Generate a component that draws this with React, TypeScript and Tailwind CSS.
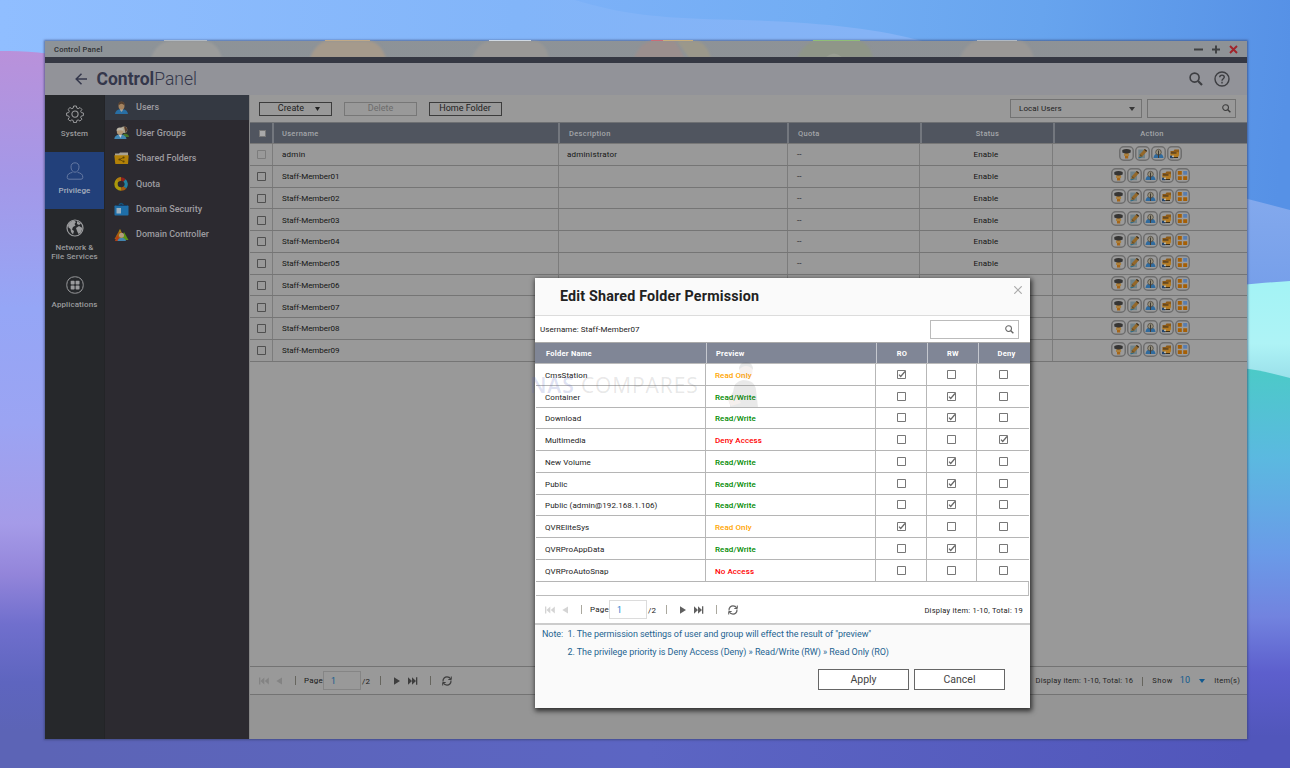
import type { ReactNode } from "react";

const users = ["admin", ...Array.from({ length: 9 }, (_, i) => `Staff-Member0${i + 1}`)];

type Access = "RO" | "RW" | "Deny" | "None";

const folders: { name: string; access: Access }[] = [
  { name: "CmsStation", access: "RO" },
  { name: "Container", access: "RW" },
  { name: "Download", access: "RW" },
  { name: "Multimedia", access: "Deny" },
  { name: "New Volume", access: "RW" },
  { name: "Public", access: "RW" },
  { name: "Public (admin@192.168.1.106)", access: "RW" },
  { name: "QVREliteSys", access: "RO" },
  { name: "QVRProAppData", access: "RW" },
  { name: "QVRProAutoSnap", access: "None" },
];

const preview: Record<Access, { label: string; color: string }> = {
  RO: { label: "Read Only", color: "text-[#ffa500]" },
  RW: { label: "Read/Write", color: "text-[#008a00]" },
  Deny: { label: "Deny Access", color: "text-[#ff0000]" },
  None: { label: "No Access", color: "text-[#ff0000]" },
};

function Wallpaper() {
  return (
    <svg className="absolute inset-0 h-full w-full" viewBox="0 0 1290 768" preserveAspectRatio="none">
      <defs>
        <linearGradient id="sky" x1="0" x2="1" y1="0" y2="0">
          <stop offset="0" stopColor="#90beff" />
          <stop offset="0.4" stopColor="#82b5f9" />
          <stop offset="0.6" stopColor="#84b3f6" />
          <stop offset="0.75" stopColor="#86b3f5" />
          <stop offset="1" stopColor="#5691e6" />
        </linearGradient>
        <linearGradient id="deep" x1="575" x2="1290" y1="0" y2="60" gradientUnits="userSpaceOnUse">
          <stop offset="0" stopColor="#7cb1f8" />
          <stop offset="0.35" stopColor="#72adf3" />
          <stop offset="0.65" stopColor="#67a4ee" />
          <stop offset="1" stopColor="#5691e6" />
        </linearGradient>
        <linearGradient id="left" x1="0" x2="0" y1="50" y2="768" gradientUnits="userSpaceOnUse">
          <stop offset="0" stopColor="#b991da" />
          <stop offset="0.18" stopColor="#a498e8" />
          <stop offset="0.36" stopColor="#95a6f6" />
          <stop offset="0.52" stopColor="#9ba4f3" />
          <stop offset="0.66" stopColor="#a59be8" />
          <stop offset="0.73" stopColor="#9385da" />
          <stop offset="0.8" stopColor="#706fcd" />
          <stop offset="0.88" stopColor="#5e65bf" />
          <stop offset="0.95" stopColor="#5c64b6" />
          <stop offset="1" stopColor="#5c64b6" />
        </linearGradient>
        <linearGradient id="right" x1="0" x2="0" y1="370" y2="768" gradientUnits="userSpaceOnUse">
          <stop offset="0" stopColor="#4ccac8" />
          <stop offset="0.22" stopColor="#5bb9e0" />
          <stop offset="0.46" stopColor="#6a9be8" />
          <stop offset="0.62" stopColor="#7283df" />
          <stop offset="0.76" stopColor="#5d5fcd" />
          <stop offset="0.92" stopColor="#5156bb" />
          <stop offset="1" stopColor="#5156bb" />
        </linearGradient>
        <linearGradient id="floor" x1="0" x2="1" y1="0" y2="0">
          <stop offset="0" stopColor="#5c64b6" />
          <stop offset="0.5" stopColor="#5c65c3" />
          <stop offset="1" stopColor="#5156bb" />
        </linearGradient>
        <linearGradient id="mint" x1="0" x2="0" y1="0" y2="1">
          <stop offset="0" stopColor="#a3f3f5" />
          <stop offset="0.6" stopColor="#aef3f6" />
          <stop offset="1" stopColor="#97dde8" />
        </linearGradient>
        <linearGradient id="peri" x1="0" x2="0" y1="0" y2="1">
          <stop offset="0" stopColor="#83a9ed" />
          <stop offset="1" stopColor="#769fea" />
        </linearGradient>
      </defs>
      <rect width="1290" height="768" fill="url(#sky)" />
      <path d="M575 0C620 14 660 18 720 19.500C800 21 870 26 926 42L1290 300V0Z" fill="url(#deep)" />
      <path d="M0 51C25 51 50 52 80 60L80 768L0 768Z" fill="url(#left)" />
      <path d="M1240 197L1290 210L1290 290L1240 290Z" fill="url(#peri)" />
      <path d="M1240 285C1260 283 1275 282 1290 281L1290 385L1240 378Z" fill="url(#mint)" />
      <path d="M1240 368C1260 370 1275 374 1290 378L1290 768L1240 768Z" fill="url(#right)" />
      <rect x="45" y="736" width="1202" height="32" fill="url(#floor)" />
    </svg>
  );
}

function TitleBlobs() {
  return (
    <svg className="absolute left-0 -top-[1px] h-[17px] w-full" viewBox="0 0 1202 17">
      <defs>
        <filter id="soft" x="-10%" y="-10%" width="120%" height="120%">
          <feGaussianBlur stdDeviation="1" />
        </filter>
      </defs>
      <g filter="url(#soft)">
        <path d="M106 18Q112 1 127 1H158Q172 1 177 18Z" fill="#9b9c9b" />
        <path d="M265 18Q272 1 284 1H322Q335 1 341 18Z" fill="#a59a8c" />
        <path d="M427 18Q434 1 447 1H488Q500 1 504 18Z" fill="#999896" />
        <path d="M589 18Q596 1 608 1H630L640 18Z" fill="#9b8f8e" />
        <path d="M632 1H650Q661 1 666 18H644Z" fill="#9b988b" />
        <path d="M752 18Q760 1 773 1H812Q824 1 828 18Z" fill="#8f9688" />
        <path d="M915 18Q922 1 934 1H973Q984 1 989 18Z" fill="#9a9896" />
      </g>
      <path d="M119 .5H162M932 .5H972" stroke="#b0b9c3" />
      <path d="M280 .5H325" stroke="#c0a987" />
      <path d="M444 .5H486" stroke="#d0d9e3" />
      <path d="M606 .5H618" stroke="#c86d78" />
      <path d="M618 .5H648" stroke="#c8ae7c" />
      <path d="M768 .5H815" stroke="#8fbe76" />
      <path d="M780 18Q789 9 798 18" fill="#999e92" />
    </svg>
  );
}

function Search({ className }: { className: string }) {
  return (
    <svg viewBox="0 0 14 14" className={className} fill="none" stroke="currentColor">
      <circle cx="5.6" cy="5.6" r="4.5" strokeWidth="1.6" />
      <path d="M9 9l4 4" strokeWidth="2.2" />
    </svg>
  );
}

function Box({ checked, className = "text-[#777]" }: { checked?: boolean; className?: string }) {
  return (
    <svg viewBox="0 0 9 9" className={`block h-[9px] w-[9px] ${className}`} fill="none" stroke="currentColor">
      <path d="M.5 .5H8.5V8.5H.5Z" />
      {checked && <path d="M2 4.7L3.7 6.5L8 1.5" stroke="#666" strokeWidth="1.2" />}
    </svg>
  );
}

function SideIcon({ kind }: { kind: string }) {
  return (
    <svg viewBox="0 0 18 18" className="block h-[18px] w-[18px]" fill="none" stroke="currentColor">
      {kind === "gear" && (
        <>
          <path d="M7.6 1h2.8l.4 2.1 1.4.6 1.8-1.2 1.9 1.9-1.2 1.8.6 1.4 2.1.4v2.6l-2.1.4-.6 1.4 1.2 1.8-1.9 1.9-1.8-1.2-1.4.6-.4 2.1H7.6l-.4-2.1-1.4-.6L4 16.100l-1.900-1.900 1.200-1.800-.6-1.400-2.100-.4V8l2.100-.4.6-1.400L2.100 4.400 4 2.500l1.800 1.200 1.400-.6z" strokeWidth="1" />
          <circle cx="9" cy="9.100" r="3.100" strokeWidth="1.100" />
        </>
      )}
      {kind === "user" && (
        <>
          <path d="M9 .8C6.200.8 5 2.600 5 5.100C5 8 6.800 10.200 9 10.200S13 8 13 5.100C13 2.600 11.800.8 9 .8Z" />
          <path d="M6.400 10.400C3.200 11.200 1.200 12 1.200 15.400Q1.200 17.200 3 17.200H15Q16.800 17.200 16.800 15.400C16.800 12 14.800 11.200 11.600 10.400" />
        </>
      )}
      {kind === "globe" && (
        <>
          <circle cx="9" cy="9" r="8" strokeWidth="1.200" />
          <path d="M2 6Q4 2 8 1.500L10 3 8.500 5 9.500 6.500 7 8 6 10.500 8 12 7 15.500 5 13 4.500 10 2.500 8.500ZM11 2L15 4.500 13 6 11 5ZM10 9L13 7 16.500 9 15 13.500 12.500 15 11 12Z" fill="currentColor" stroke="none" />
        </>
      )}
      {kind === "apps" && (
        <>
          <rect x=".8" y=".8" width="16.400" height="16.400" rx="7.500" />
          <g fill="currentColor" stroke="none">
            <rect x="4.700" y="4.700" width="3.900" height="3.900" rx=".8" />
            <rect x="9.600" y="4.700" width="3.900" height="3.900" rx=".8" />
            <rect x="4.700" y="9.600" width="3.900" height="3.900" rx=".8" />
            <rect x="9.600" y="9.600" width="3.900" height="3.900" rx=".8" />
          </g>
        </>
      )}
    </svg>
  );
}

function MenuIcon({ kind }: { kind: string }) {
  return (
    <svg viewBox="0 0 15 14" className="block h-[14px] w-[15px]">
      {kind === "users" && (
        <>
          <path d="M1 13Q1.500 9 6 8.300H9Q13.500 9 14 13Z" fill="#286ea3" />
          <path d="M6 7H9V9L7.500 11 6 9Z" fill="#a5a39f" />
          <ellipse cx="7.500" cy="4.700" rx="3" ry="3.900" fill="#a4835f" />
          <path d="M4.500 4.500Q4 .5 7.500 .5T10.500 4.500Q9 2.800 7.500 2.800T4.500 4.500Z" fill="#554030" />
        </>
      )}
      {kind === "groups" && (
        <>
          <path d="M8 11Q8 8 11 7.500Q15 8 15 11Z" fill="#47752a" />
          <circle cx="10" cy="3.700" r="3.300" fill="#b0a792" />
          <path d="M10 .5Q13.300 .7 13.200 4.500L11.500 7Z" fill="#5b3d28" />
          <path d="M.3 13Q.5 9.500 4.500 8.500H8Q12 9.500 12.500 13Z" fill="#4287b3" />
          <path d="M4.500 8.500H8L6.500 12Z" fill="#ccc" />
          <circle cx="6" cy="5.500" r="3.200" fill="#b39775" />
          <path d="M2.600 5Q2.200 1.500 6 1.500T9.200 5Q7 3.500 2.600 5Z" fill="#bbb5a7" />
        </>
      )}
      {kind === "folder" && (
        <>
          <path d="M1 2.500H5L6 1.500H14V11H1Z" fill="#aaa393" />
          <path d="M.3 4.300H14.700L14 13H1.300Z" fill="#b28108" />
          <path d="M5.500 8.500L9.500 6.500M5.500 8.500L9.500 10.500" stroke="#5f4507" strokeWidth=".8" />
          <circle cx="5.500" cy="8.500" r="1.100" fill="#5f4507" />
          <circle cx="9.600" cy="6.500" r="1" fill="#5f4507" />
          <circle cx="9.600" cy="10.500" r="1" fill="#5f4507" />
        </>
      )}
      {kind === "quota" && (
        <g fill="none" strokeWidth="3.400">
          <path d="M7 2A5 5 0 0 0 7 12" stroke="#aa980b" />
          <path d="M3.500 3.500A5 5 0 0 1 7 2" stroke="#b07a12" />
          <path d="M7 12A5 5 0 0 0 11 10.500" stroke="#a55b10" />
          <path d="M7 2A5 5 0 0 1 10.500 3.500" stroke="#90211c" />
          <path d="M10.500 3.500A5 5 0 0 1 11 10.500" stroke="#2382a0" />
        </g>
      )}
      {kind === "security" && (
        <>
          <path d="M4.500 4Q7 -1 10 4" stroke="#12547f" strokeWidth="1.400" fill="none" />
          <rect x=".5" y="3.500" width="14" height="10" rx=".8" fill="#1e6ea8" />
          <rect x="2.500" y="6" width="4.500" height="5.500" fill="#9cb0bf" />
          <path d="M2.500 3.500H13" stroke="#143f69" />
        </>
      )}
      {kind === "controller" && (
        <>
          <path d="M6 1L11 11H.5Z" fill="#a4620d" />
          <path d="M10 4L14.500 12H7Z" fill="#5a9414" />
          <path d="M3 7L7 13H1Z" fill="#b53e14" />
          <path d="M3.500 13Q4 10 7.500 9.800Q11.500 10 12 13Z" fill="#4384ad" />
          <circle cx="7.500" cy="7.300" r="2.500" fill="#b39b7c" />
          <path d="M6 1L7 4H5Z" fill="#98931a" />
        </>
      )}
    </svg>
  );
}

function ActionIcon({ kind }: { kind: number }) {
  return (
    <svg viewBox="0 0 15 15" className="block h-[15px] w-[15px] shrink-0">
      <rect x=".75" y=".75" width="13.500" height="13.500" rx="4" fill="#9b9b9b" stroke="#6e6e6e" strokeWidth="1.500" />
      <g transform="translate(2.500 2.500)">
        {kind === 0 && (
          <>
            <path d="M3.500 4H6.700V10H3.500Z" fill="#a5661a" />
            <path d="M2.500 5H7.600V7.500H2.500Z" fill="#aa803e" />
            <path d="M.8 1.500Q5 -.5 9.200 1.500V4Q5 5.800 .8 4Z" fill="#363534" />
          </>
        )}
        {kind === 1 && (
          <>
            <path d="M.8 1H7.500V9.700H.8Z" fill="#6f8289" />
            <path d="M1.500 9L2.600 5.500 7.200 .6 9.600 2.500 4.800 8Z" fill="#946829" />
            <path d="M7 .9L9.200 2.800" stroke="#332a20" strokeWidth="1.200" />
            <path d="M2.500 6L4.300 8" stroke="#3a3227" strokeWidth=".8" />
            <path d="M1 9.500L4 8.500" stroke="#2d6a85" strokeWidth="1.300" />
          </>
        )}
        {kind === 2 && (
          <>
            <path d="M0 9.500Q.3 6 3 5.200H7Q9.700 6 10 9.500Z" fill="#306b9e" />
            <path d="M2.200 4Q2.200 .8 5 .8T7.800 4Q7.500 6.500 5 6.500T2.200 4Z" fill="#97907c" stroke="#4c483f" strokeWidth=".8" />
            <path d="M5 2V9.500" stroke="#3c3a36" />
          </>
        )}
        {kind === 3 && (
          <>
            <path d="M1 2.500H4L5 1H9.500V5.500H1Z" fill="#8e5b17" />
            <path d="M.8 4.500L9 3.500 9.700 6.500 8 9H4L1 7Z" fill="#b37a22" />
            <path d="M1.500 4.500H7" stroke="#352a20" />
            <path d="M.5 7.200H3.700V9.700H.5Z" fill="#24466f" />
            <path d="M2.500 7H4.500V8.500H2.500Z" fill="#b9b6a6" />
            <path d="M4 9H8.500" stroke="#3a2e1a" />
          </>
        )}
        {kind === 4 && (
          <>
            <path d="M.3 .5H4.300V4.200H.3ZM.3 5.800H4.300V9.500H.3ZM5.700 5.800H9.700V9.500H5.700Z" fill="#a55f06" />
            <path d="M5.700 .5H9.700V4.200H5.700Z" fill="#587db0" />
          </>
        )}
      </g>
    </svg>
  );
}

function Pager({ dim }: { dim?: boolean }) {
  const faint = dim ? "text-[#838383]" : "text-[#d4d4d4]";
  const strong = dim ? "text-[#3e3e3e]" : "text-[#606060]";
  const sep = dim ? "bg-[#66655e]" : "bg-[#aaa89e]";
  return (
    <div className={`flex items-center text-[8px] tracking-[0.25px] ${dim ? "text-[#1a1a1a]" : "text-[#222]"}`}>
      <svg viewBox="0 0 10 8" className={`h-[8px] w-[10px] ${faint}`} fill="currentColor">
        <path d="M0 .5H1.300V7.500H0ZM5.300 .5V7.500L1.500 4ZM9.800 .5V7.500L5.800 4Z" />
      </svg>
      <svg viewBox="0 0 6 8" className={`ml-[7px] h-[8px] w-[6px] ${faint}`} fill="currentColor">
        <path d="M6 .5V7.500L.3 4Z" />
      </svg>
      <span className={`ml-[13px] h-[9px] w-px ${sep}`} />
      <span className="ml-[8px] w-[19px] pt-px whitespace-nowrap">Page</span>
      <span className={`flex h-[19px] w-[38px] items-center border pt-px pl-[7px] text-[8.500px] ${dim ? "border-[#858585] text-[#11598f]" : "border-[#dcdcdc] text-[#2083cf]"}`}>1</span>
      <span className="ml-[1px] w-[10px] pt-[2px]">/2</span>
      <span className={`ml-[8px] h-[9px] w-px ${sep}`} />
      <svg viewBox="0 0 6 8" className={`ml-[13px] h-[8px] w-[6px] ${strong}`} fill="currentColor">
        <path d="M0 .3V7.700L6 4Z" />
      </svg>
      <svg viewBox="0 0 10 8" className={`ml-[8px] h-[8px] w-[10px] ${strong}`} fill="currentColor">
        <path d="M0 .3V7.700L4 4ZM4 .3V7.700L8 4ZM8 .3H9.300V7.700H8Z" />
      </svg>
      <span className={`ml-[12px] h-[9px] w-px ${sep}`} />
      <svg viewBox="0 0 10 10" className={`ml-[11px] h-[10px] w-[10px] ${strong}`} fill="none" stroke="currentColor" strokeWidth="1.200">
        <path d="M1 5.500C.8 2.300 3 .9 5 .9C6.800 .9 8 1.800 8.700 3M9 4.500C9.200 7.700 7 9.100 5 9.100C3.200 9.100 2 8.200 1.300 7" />
        <path d="M9.300 .5V3.500H6.300M.7 9.500V6.500H3.700" strokeWidth="1" />
      </svg>
    </div>
  );
}

function Cell({ className, children }: { className: string; children?: ReactNode }) {
  return <div className={`flex h-full shrink-0 items-center whitespace-nowrap ${className}`}>{children}</div>;
}

function UsersTable() {
  const line = "border-r-[1.500px] border-[#7c7c7c]";
  const head = "border-r-2 border-[#73777e]";
  return (
    <>
      <div className="flex h-[22px] shrink-0 border-y border-t-[#6e7073] border-b-[#777] bg-[#50555f] text-[7.500px] font-medium tracking-[0.300px] text-[#a3a5a9]">
        <Cell className={`w-[24px] justify-center ${head}`}>
          <span className="ml-[2px] h-[7px] w-[7px] border border-[#777] bg-[#a9a9a9]" />
        </Cell>
        <Cell className={`w-[286px] pt-[2px] pl-[8px] ${head}`}>Username</Cell>
        <Cell className={`w-[229px] pt-[2px] pl-[9px] ${head}`}>Description</Cell>
        <Cell className={`w-[133px] pt-[2px] pl-[9px] ${head}`}>Quota</Cell>
        <Cell className={`w-[133px] justify-center pt-[2px] ${head}`}>Status</Cell>
        <Cell className="w-[194px] justify-center pt-[2px]">Action</Cell>
      </div>
      {users.map((name, i) => (
        <div key={name} className="flex h-[21.750px] shrink-0 border-b border-[#757575] text-[8px] text-[#151515]">
          <Cell className={`w-[23px] justify-center pt-px pl-px ${line}`}>
            <Box className={i === 0 ? "text-[#7c7c7c]" : "text-[#505050]"} />
          </Cell>
          <Cell className={`w-[286px] pt-[2px] pl-[9px] ${i === 0 ? "tracking-[0.250px]" : "tracking-[-0.050px]"} ${line}`}>{name}</Cell>
          <Cell className={`w-[229px] pt-[2px] pl-[8px] tracking-[0.200px] ${line}`}>{i === 0 ? "administrator" : ""}</Cell>
          <Cell className={`w-[132px] pt-[2px] pl-[9px] ${line}`}>--</Cell>
          <Cell className={`w-[133px] justify-center pt-[2px] tracking-[0.150px] ${line}`}>Enable</Cell>
          <Cell className="w-[195px] justify-center gap-px pr-px pb-[2px]">
            {[0, 1, 2, 3, 4].slice(0, i === 0 ? 4 : 5).map((k) => (
              <ActionIcon key={k} kind={k} />
            ))}
          </Cell>
        </div>
      ))}
    </>
  );
}

function PermissionDialog() {
  const line = "border-r border-[#b7b7b7]";
  const head = "border-r-[1.500px] border-[#c5c8cf]";
  return (
    <div className="absolute top-[278px] left-[535px] flex h-[430px] w-[495px] flex-col bg-white text-[#222] shadow-[1px_2px_5px_1px_rgba(0,0,0,0.7)]">
      <div className="flex h-[38px] shrink-0 items-start justify-between border-b border-[#dcdcdc] bg-[#fafafa] pt-[8px] pr-[8px] pl-[25px]">
        <h2 className="text-[14.300px] leading-[21px] font-bold tracking-[0.180px] text-[#222]">Edit Shared Folder Permission</h2>
        <svg viewBox="0 0 8 8" className="h-[8px] w-[8px]" stroke="#aaa" strokeWidth="1.200">
          <path d="M.3 .3L7.700 7.700M7.700 .3L.3 7.700" />
        </svg>
      </div>
      <div className="flex h-[26px] shrink-0 items-center justify-between pr-[11px] pl-[5px] text-[8px] tracking-[0.050px]">
        <span className="pt-px">Username: Staff-Member07</span>
        <span className="flex h-[19px] w-[89px] items-center justify-end border border-[#bbb] pr-[4px] text-[#666]">
          <Search className="h-[9px] w-[9px]" />
        </span>
      </div>
      <div className="flex h-[22px] shrink-0 border-y border-t-[#aaa] border-b-[#bbb] bg-[#808696] pl-px text-[7.500px] font-bold tracking-[0.250px] text-white">
        <Cell className={`w-[171px] pt-[2px] pl-[10px] ${head}`}>Folder Name</Cell>
        <Cell className={`w-[170px] pt-[2px] pl-[9px] ${head}`}>Preview</Cell>
        <Cell className={`w-[51px] justify-center pt-[2px] ${head}`}>RO</Cell>
        <Cell className={`w-[51px] justify-center pt-[2px] ${head}`}>RW</Cell>
        <Cell className="w-[51px] justify-center pt-[2px] pl-[4px]">Deny</Cell>
      </div>
      {folders.map((f) => (
        <div key={f.name} className="mx-px flex h-[21.750px] shrink-0 border-b border-[#b5b5b5] text-[8px] tracking-[0.080px]">
          <Cell className={`w-[170px] pt-[3px] pl-[9px] ${line}`}>{f.name}</Cell>
          <Cell className={`w-[170px] pt-[3px] pl-[9px] font-medium ${line} ${preview[f.access].color}`}>{preview[f.access].label}</Cell>
          <Cell className={`w-[51px] justify-center ${line}`}><Box checked={f.access === "RO"} /></Cell>
          <Cell className={`w-[50px] justify-center ${line}`}><Box checked={f.access === "RW"} /></Cell>
          <Cell className="w-[52px] justify-center pl-px"><Box checked={f.access === "Deny"} /></Cell>
        </div>
      ))}
      <div className="mx-px h-[14.500px] shrink-0 border-r border-b border-[#bbb]" />
      <div className="flex h-[29px] shrink-0 items-center justify-between border-b-2 border-[#ccc] pr-[7px] pl-[10px]">
        <Pager />
        <span className="pt-[2px] text-[7.500px] tracking-[0.250px]">Display item: 1-10, Total: 19</span>
      </div>
      <div className="flex flex-1 flex-col bg-[#fafafa] text-[9px] tracking-[-0.060px] text-[#256491]">
        <div className="flex h-[19px] items-center whitespace-nowrap">
          <span className="w-[32.500px] pl-[7px]">Note:</span>
          <span>1. The permission settings of user and group will effect the result of "preview"</span>
        </div>
        <div className="flex h-[17px] items-center pl-[32.500px] whitespace-nowrap">2. The privilege priority is Deny Access (Deny) » Read/Write (RW) » Read Only (RO)</div>
        <div className="mt-[8px] flex gap-[5px] pl-[283px] text-[10.500px] tracking-normal text-[#444]">
          <button className="h-[21px] w-[91px] border border-[#666] bg-white">Apply</button>
          <button className="h-[21px] w-[91px] border border-[#666] bg-white">Cancel</button>
        </div>
      </div>
      <div className="pointer-events-none absolute top-[84px] -left-[5px] flex items-center whitespace-nowrap">
        <span className="w-[174px] font-['Open_Sans',sans-serif] text-[21px] leading-[44px] tracking-[0.900px] text-[#555]/15">
          <span className="font-semibold text-[#5565bb]/20">NAS</span> COMPARES
        </span>
        <svg viewBox="0 0 34 46" className="ml-[22px] h-[46px] w-[34px] opacity-12">
          <ellipse cx="20" cy="9" rx="6.500" ry="8.500" fill="#c09a8e" />
          <path d="M13 8Q13 0 20 0T27 8Q24 4 20 4T13 8Z" fill="#555" />
          <path d="M4 43Q1 38 7 30Q8 19 17 18Q29 18 30 28L32 45H4Z" fill="#555" />
          <path d="M1 36L10 34 15 41 5 44Z" fill="#b08070" />
        </svg>
      </div>
    </div>
  );
}

const side = [
  { kind: "gear", label: ["System"] },
  { kind: "user", label: ["Privilege"] },
  { kind: "globe", label: ["Network &", "File Services"] },
  { kind: "apps", label: ["Applications"] },
];

const menu = [
  ["users", "Users"],
  ["groups", "User Groups"],
  ["folder", "Shared Folders"],
  ["quota", "Quota"],
  ["security", "Domain Security"],
  ["controller", "Domain Controller"],
];

export default function App() {
  return (
    <div className="relative h-[768px] w-[1290px] overflow-hidden bg-[#5c64b6] pt-[41px] pl-[45px] font-[Roboto,sans-serif]">
      <Wallpaper />
      <div className="relative flex h-[698px] w-[1202px] flex-col shadow-[0_0_2px_1px_rgba(50,60,100,0.6)]">
        <div className="relative flex h-[16px] shrink-0 items-center justify-between bg-linear-to-r from-[#8d9398] to-[#8e9296] pr-[9px] pl-[9px]">
          <TitleBlobs />
          <span className="relative pt-[2px] text-[7.500px] font-medium tracking-[0.250px] text-[#2c2e31]">Control Panel</span>
          <svg viewBox="0 0 44 9" className="relative h-[9px] w-[44px]" fill="none" stroke="#3e4042" strokeWidth="1.900">
            <path d="M0 4.500H9M18 4.500H26M22 .5V8.500" />
            <path d="M36 1L43 8M43 1L36 8" stroke="#a1232a" />
          </svg>
        </div>
        <div className="h-[6px] shrink-0 bg-[#353843]" />
        <header className="flex h-[32px] shrink-0 items-center bg-[#929399] pr-[17px] pl-[30px] text-[#34374b]">
          <svg viewBox="0 0 12 12" className="h-[12px] w-[12px]" fill="none" stroke="currentColor" strokeWidth="1.500">
            <path d="M12 6H1M6.500 .7L1.200 6L6.500 11.300" />
          </svg>
          <h1 className="ml-[9.500px] flex-1 pt-px text-[17.500px] leading-none"><span className="font-bold">Control</span><span className="font-light">Panel</span></h1>
          <Search className="h-[14px] w-[14px] text-[#3d3e42]" />
          <svg viewBox="0 0 16 16" className="ml-[11px] h-[16px] w-[16px] text-[#3d3e42]" fill="none" stroke="currentColor" strokeWidth="1.400">
            <circle cx="8" cy="8" r="7" />
            <path d="M5.700 6.300C5.700 3.400 10.300 3.400 10.300 6.100C10.300 7.600 8 7.800 8 9.700M8 10.800V12.400" />
          </svg>
        </header>
        <div className="flex min-h-0 flex-1">
          <nav className="flex w-[60px] shrink-0 flex-col border-r border-[#232427] bg-[#26282b]">
            {side.map((s) => (
              <div
                key={s.kind}
                className={`flex h-[57px] shrink-0 flex-col items-center pt-[9.500px] text-center text-[8px] leading-[9px] font-medium tracking-[0.100px] whitespace-nowrap ${s.kind === "user" ? "bg-[#22407a] text-[#a8b0be]" : "text-[#9a9b9d]"}`}
              >
                <span className={s.kind === "user" ? "text-[#6478a2]" : ""}><SideIcon kind={s.kind} /></span>
                <div className="mt-[6px]">{s.label.map((l) => <div key={l}>{l}</div>)}</div>
              </div>
            ))}
          </nav>
          <aside className="w-[144px] shrink-0 bg-[#2c2a30]">
            {menu.map(([kind, label], i) => (
              <div key={kind} className={`flex h-[25.400px] items-center gap-[7px] pl-[9px] text-[9px] font-medium text-[#9d9ca0] ${i === 0 ? "bg-[#343942]" : ""}`}>
                <MenuIcon kind={kind} />
                <span className={i === 0 ? "" : "pt-px"}>{label}</span>
              </div>
            ))}
          </aside>
          <main className="flex w-[998px] flex-col border-l border-[#888] bg-[#999]">
            <div className="flex h-[27px] shrink-0 items-center pr-[11px] pl-[9px] text-[9px] text-[#222]">
              <div className="flex h-[14px] w-[73px] items-center justify-end gap-[11px] border border-[#3c3c3c] pr-[11px]">
                <span>Create</span>
                <svg viewBox="0 0 5 4" className="h-[4px] w-[5px]"><path d="M0 0H5L2.500 4Z" fill="#222" /></svg>
              </div>
              <div className="ml-[12px] flex h-[14px] w-[73px] items-center justify-center border border-[#777] text-[#6c6c6c]">Delete</div>
              <div className="ml-[11.500px] flex h-[14px] w-[73px] items-center justify-center border border-[#3c3c3c]">Home Folder</div>
              <div className="flex-1" />
              <div className="flex h-[19px] w-[132px] items-center justify-between border border-[#727272] pr-[6px] pl-[8px] text-[8px] tracking-[0.100px]">
                <span className="pt-px">Local Users</span>
                <svg viewBox="0 0 6 4" className="h-[4px] w-[6px]"><path d="M0 0H6L3 4Z" fill="#383838" /></svg>
              </div>
              <div className="ml-[5px] flex h-[19px] w-[89px] items-center justify-end border border-[#727272] pr-[4px] text-[#3c3c3c]">
                <Search className="h-[9px] w-[9px]" />
              </div>
            </div>
            <UsersTable />
            <div className="flex-1" />
            <div className="flex h-[29px] shrink-0 items-center justify-between border-t border-b-[1.500px] border-[#737373] pr-[7px] pl-[9px]">
              <Pager dim />
              <div className="flex items-center pt-px text-[7.500px] tracking-[0.220px] text-[#252525]">
                <span>Display item: 1-10, Total: 16</span>
                <span className="ml-[9px] h-[9px] w-px bg-[#66655e]" />
                <span className="ml-[9px] tracking-[0.500px]">Show</span>
                <span className="ml-[7px] text-[9px] text-[#11598f]">10</span>
                <svg viewBox="0 0 6 4" className="ml-[9px] h-[4px] w-[6px]"><path d="M0 0H6L3 4Z" fill="#11598f" /></svg>
                <span className="ml-[9px]">Item(s)</span>
              </div>
            </div>
            <div className="h-[44px] shrink-0 bg-[#959595]" />
          </main>
        </div>
      </div>
      <PermissionDialog />
    </div>
  );
}
